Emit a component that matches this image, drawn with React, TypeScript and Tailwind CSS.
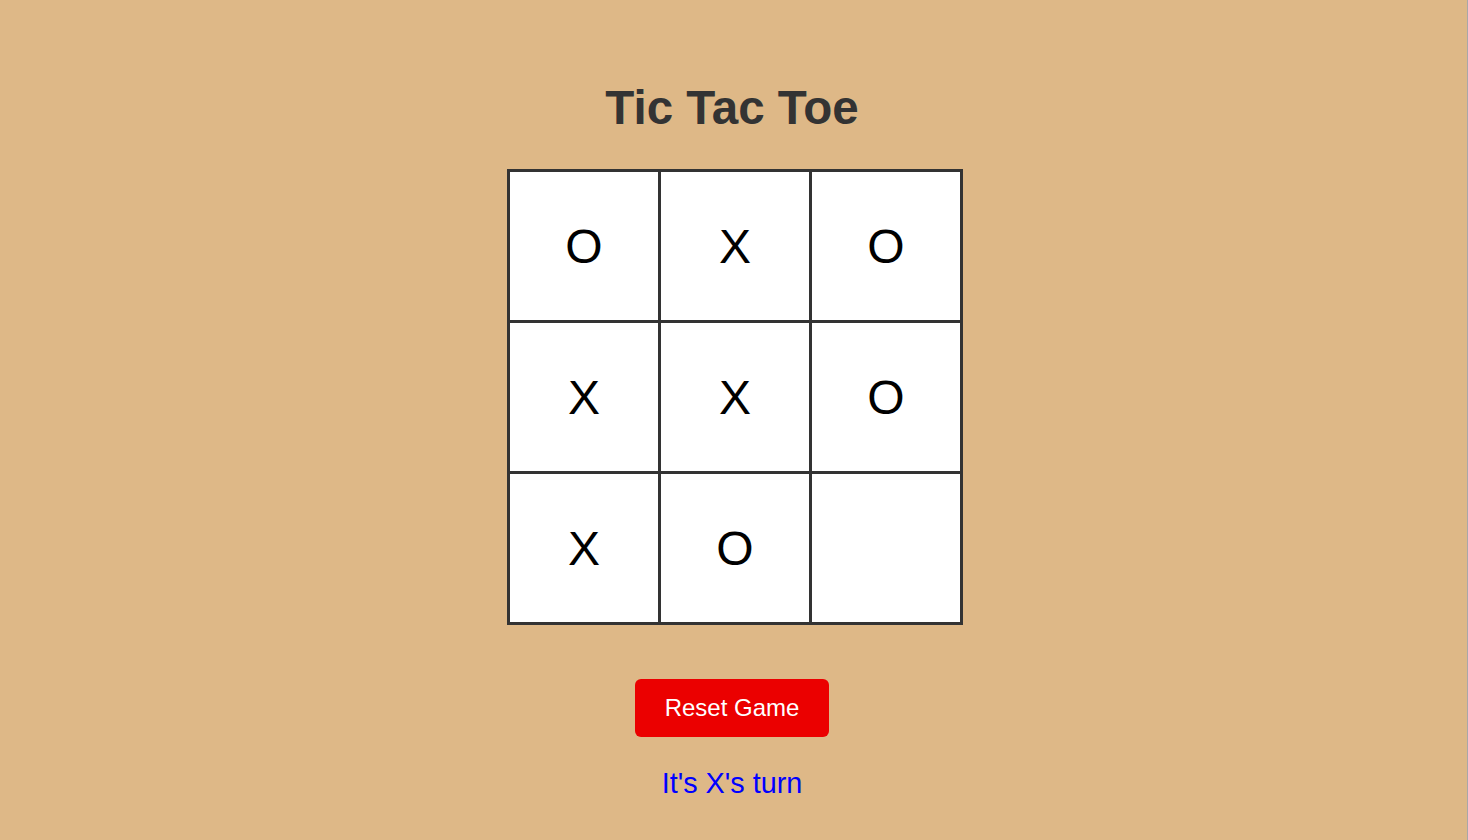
import React from "react";

const cells = ["O", "X", "O", "X", "X", "O", "X", "O", ""];

export default function App() {
  return (
    <div
      className="flex h-[840px] w-full flex-col items-center border-r border-[#a8a8a8] bg-[#deb887] pr-[3px] pt-[84px]"
      style={{ fontFamily: '"Liberation Sans", Arial, sans-serif' }}
    >
      <h1 className="text-[47.5px] font-bold leading-[48px] text-[#333333]">Tic Tac Toe</h1>
      <div className="ml-[6px] mt-[37px] grid grid-cols-[148px_148px_148px] grid-rows-[148px_148px_148px] gap-[3px] border-[3px] border-[#333333] bg-[#333333]">
        {cells.map((c, i) => (
          <div
            key={i}
            className="flex items-center justify-center bg-white pt-[2px] text-[48px] leading-[48px] text-black"
          >
            {c}
          </div>
        ))}
      </div>
      <button className="mt-[54px] flex h-[58px] w-[194px] items-center justify-center rounded-[6px] bg-[#eb0000] text-[24px] leading-[24px] text-white">
        Reset Game
      </button>
      <p className="mt-[32px] text-[28.8px] leading-[28.8px] text-[#0000ff]">It's X's turn</p>
    </div>
  );
}
